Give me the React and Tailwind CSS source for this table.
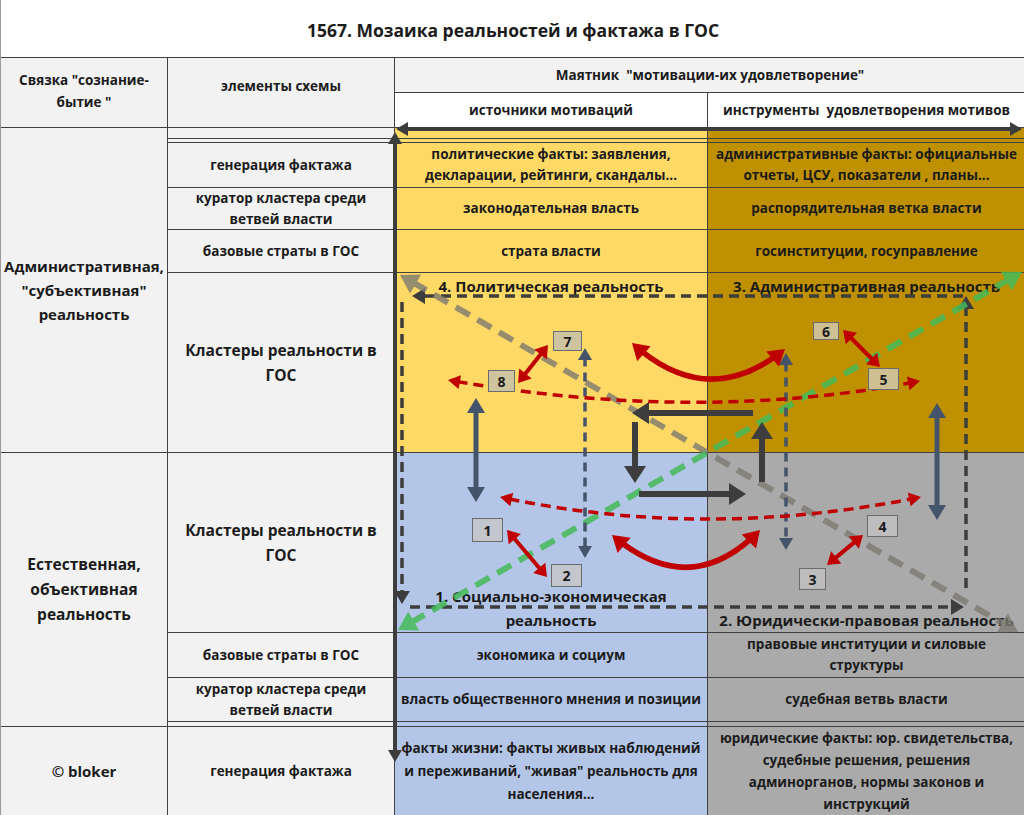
import React from 'react';

// arrow geometry helpers (page coordinates)
function unit(dx, dy) {
  const l = Math.hypot(dx, dy) || 1;
  return [dx / l, dy / l];
}

function headPts(tx, ty, ux, uy, len, half) {
  const bx = tx - ux * len;
  const by = ty - uy * len;
  return `${tx},${ty} ${bx - uy * half},${by + ux * half} ${bx + uy * half},${by - ux * half}`;
}

function Arrow({ x1, y1, x2, y2, color, w, dash, len = 12, half = 7, start = false, end = true, opacity = 1 }) {
  const [ux, uy] = unit(x2 - x1, y2 - y1);
  const cut = len * 0.8;
  const sx = start ? x1 + ux * cut : x1;
  const sy = start ? y1 + uy * cut : y1;
  const ex = end ? x2 - ux * cut : x2;
  const ey = end ? y2 - uy * cut : y2;
  return (
    <g opacity={opacity}>
      <line x1={sx} y1={sy} x2={ex} y2={ey} stroke={color} strokeWidth={w} strokeDasharray={dash} />
      {end && <polygon points={headPts(x2, y2, ux, uy, len, half)} fill={color} />}
      {start && <polygon points={headPts(x1, y1, -ux, -uy, len, half)} fill={color} />}
    </g>
  );
}

function Curve({ p0, c, p1, color, w, dash, len = 12, half = 7 }) {
  const cut = len * 0.8;
  const t0 = cut / (2 * Math.hypot(c[0] - p0[0], c[1] - p0[1]));
  const t1 = 1 - cut / (2 * Math.hypot(p1[0] - c[0], p1[1] - c[1]));
  const pt = (t) => [
    (1 - t) * (1 - t) * p0[0] + 2 * t * (1 - t) * c[0] + t * t * p1[0],
    (1 - t) * (1 - t) * p0[1] + 2 * t * (1 - t) * c[1] + t * t * p1[1],
  ];
  const a = pt(t0);
  const b = pt(t1);
  const k0 = (1 - t0) * (1 - t1);
  const k1 = (1 - t0) * t1 + t0 * (1 - t1);
  const k2 = t0 * t1;
  const cc = [k0 * p0[0] + k1 * c[0] + k2 * p1[0], k0 * p0[1] + k1 * c[1] + k2 * p1[1]];
  const [sx, sy] = unit(p0[0] - c[0], p0[1] - c[1]);
  const [ex, ey] = unit(p1[0] - c[0], p1[1] - c[1]);
  return (
    <g>
      <path
        d={`M${a[0]},${a[1]} Q${cc[0]},${cc[1]} ${b[0]},${b[1]}`}
        fill="none"
        stroke={color}
        strokeWidth={w}
        strokeDasharray={dash}
      />
      <polygon points={headPts(p0[0], p0[1], sx, sy, len, half)} fill={color} />
      <polygon points={headPts(p1[0], p1[1], ex, ey, len, half)} fill={color} />
    </g>
  );
}

function Cell({ className = '', children }) {
  return (
    <div className={`flex items-center justify-center text-center font-bold text-[#1b1b1b] ${className}`}>
      {children}
    </div>
  );
}

const RED = '#c00000';
const DARK = '#3d3d3d';
const SLATE = '#44546a';

const boxes = [
  { n: '7', x: 553, y: 331, w: 29, h: 20, bg: 'bg-[#cfc4a0]' },
  { n: '8', x: 488, y: 370, w: 27, h: 22, bg: 'bg-[#cfc4a0]' },
  { n: '6', x: 813, y: 322, w: 26, h: 18, bg: 'bg-[#cfc093]' },
  { n: '5', x: 868, y: 368, w: 31, h: 22, bg: 'bg-[#cfc093]' },
  { n: '1', x: 472, y: 518, w: 31, h: 24, bg: 'bg-[#c3c6cc]' },
  { n: '2', x: 551, y: 564, w: 31, h: 23, bg: 'bg-[#c3c6cc]' },
  { n: '4', x: 867, y: 515, w: 31, h: 22, bg: 'bg-[#bdbdbd]' },
  { n: '3', x: 799, y: 568, w: 27, h: 22, bg: 'bg-[#bdbdbd]' },
];

function Diagram() {
  return (
    <svg className="absolute left-0 top-0 pointer-events-none" width="1024" height="815" viewBox="0 0 1024 815">
      {/* pendulum axis */}
      <Arrow x1={396} y1={129} x2={1022} y2={129} color={DARK} w={4} len={12} half={7} start />
      <Arrow x1={395} y1={132} x2={395} y2={762} color={DARK} w={4} len={12} half={7} start />

      {/* dashed loop */}
      <Arrow x1={963} y1={296} x2={412} y2={296} color={DARK} w={3.5} dash="10 6" len={13} half={8} />
      <Arrow x1={402} y1={302} x2={402} y2={604} color={DARK} w={3.5} dash="10 6" len={13} half={8} />
      <Arrow x1={410} y1={607} x2={964} y2={607} color={DARK} w={3.5} dash="10 6" len={13} half={8} />
      <Arrow x1={966} y1={588} x2={966} y2={296} color={DARK} w={3.5} dash="10 6" len={13} half={8} />

      {/* diagonals */}
      <Arrow x1={400} y1={275} x2={1018} y2={632} color="#7c7a70" w={6} dash="16 9" len={18} half={11} start opacity={0.8} />
      <Arrow x1={398} y1={630} x2={1022} y2={272} color="#45bb5a" w={6} dash="16 9" len={18} half={11} start opacity={0.85} />

      {/* slate vertical arrows */}
      <Arrow x1={476} y1={398} x2={476} y2={502} color={SLATE} w={5} len={15} half={9} start />
      <Arrow x1={937} y1={403} x2={937} y2={520} color={SLATE} w={5} len={15} half={9} start />
      <Arrow x1={585} y1={348} x2={585} y2={558} color={SLATE} w={3.5} dash="9 6" len={12} half={7} start />
      <Arrow x1={786} y1={353} x2={786} y2={550} color={SLATE} w={3.5} dash="9 6" len={12} half={7} start />

      {/* central cycle */}
      <Arrow x1={753} y1={413} x2={632} y2={413} color={DARK} w={6} len={17} half={11} />
      <Arrow x1={635} y1={422} x2={635} y2={483} color={DARK} w={6} len={17} half={11} />
      <Arrow x1={639} y1={494} x2={746} y2={494} color={DARK} w={6} len={17} half={11} />
      <Arrow x1={762} y1={482} x2={762} y2={422} color={DARK} w={6} len={17} half={11} />

      {/* red dashed curves */}
      <Curve p0={[448, 380]} c={[700, 424]} p1={[920, 381]} color={RED} w={3.5} dash="10 6" len={12} half={7} />
      <Curve p0={[500, 497]} c={[705, 541]} p1={[921, 497]} color={RED} w={3.5} dash="10 6" len={12} half={7} />

      {/* red solid curves */}
      <Curve p0={[632, 343]} c={[708, 412]} p1={[785, 349]} color={RED} w={5.5} len={16} half={10} />
      <Curve p0={[612, 535]} c={[690, 602]} p1={[760, 530]} color={RED} w={5.5} len={16} half={10} />

      {/* red links between nodes */}
      <Arrow x1={518} y1={383} x2={548} y2={345} color={RED} w={4} len={12} half={8} start />
      <Arrow x1={843} y1={330} x2={880} y2={367} color={RED} w={4} len={12} half={8} start />
      <Arrow x1={507} y1={530} x2={547} y2={577} color={RED} w={4} len={12} half={8} start />
      <Arrow x1={827} y1={565} x2={863} y2={535} color={RED} w={4} len={12} half={8} start />
    </svg>
  );
}

export default function App() {
  return (
    <div className="relative w-[1024px] h-[815px] overflow-hidden bg-white font-['Open_Sans','Noto_Sans',sans-serif]">
      <div className="grid grid-cols-[166px_226px_312px_317px] grid-rows-[57px_34px_34px_10px_3px_44px_41px_42px_179px_179px_44px_43px_4px_88px] gap-px bg-[#404040] border-l border-[#9a9a9a]">
        <Cell className="col-span-4 bg-white text-[17.5px] pt-1">1567. Мозаика реальностей и фактажа в ГОС</Cell>

        {/* column 1 */}
        <Cell className="col-start-1 row-start-2 row-span-2 bg-[#f2f2f2] text-[13.5px] leading-[22px] pb-1">
          Связка "сознание-
          <br />
          бытие "
        </Cell>
        <Cell className="col-start-1 row-start-4 row-span-6 bg-[#f2f2f2] text-[15px] leading-[24px] whitespace-nowrap">
          <span>
            Административная,
            <br />
            "субъективная"
            <br />
            реальность
          </span>
        </Cell>
        <Cell className="col-start-1 row-start-10 row-span-4 bg-[#f2f2f2] text-[15.5px] leading-[25px] whitespace-nowrap">
          <span>
            Естественная,
            <br />
            объективная
            <br />
            реальность
          </span>
        </Cell>
        <Cell className="col-start-1 row-start-14 bg-[#f2f2f2] text-[15px]">© bloker</Cell>

        {/* column 2 */}
        <Cell className="col-start-2 row-start-2 row-span-2 bg-[#f2f2f2] text-[13.5px] pb-3">элементы схемы</Cell>
        <Cell className="col-start-2 row-start-4 bg-[#f2f2f2]" />
        <Cell className="col-start-2 row-start-5 bg-[#f2f2f2]" />
        <Cell className="col-start-2 row-start-6 bg-[#f2f2f2] text-[13.5px]">генерация фактажа</Cell>
        <Cell className="col-start-2 row-start-7 bg-[#f2f2f2] text-[13.5px] leading-[21px]">
          <span>
            куратор кластера среди
            <br />
            ветвей власти
          </span>
        </Cell>
        <Cell className="col-start-2 row-start-8 bg-[#f2f2f2] text-[13.5px]">базовые страты в ГОС</Cell>
        <Cell className="col-start-2 row-start-9 bg-[#f2f2f2] text-[15.5px] leading-[25px]">
          <span>
            Кластеры реальности в
            <br />
            ГОС
          </span>
        </Cell>
        <Cell className="col-start-2 row-start-10 bg-[#f2f2f2] text-[15.5px] leading-[25px]">
          <span>
            Кластеры реальности в
            <br />
            ГОС
          </span>
        </Cell>
        <Cell className="col-start-2 row-start-11 bg-[#f2f2f2] text-[13.5px]">базовые страты в ГОС</Cell>
        <Cell className="col-start-2 row-start-12 bg-[#f2f2f2] text-[13.5px] leading-[21px]">
          <span>
            куратор кластера среди
            <br />
            ветвей власти
          </span>
        </Cell>
        <Cell className="col-start-2 row-start-13 bg-[#f2f2f2]" />
        <Cell className="col-start-2 row-start-14 bg-[#f2f2f2] text-[13.5px]">генерация фактажа</Cell>

        {/* header of pendulum */}
        <Cell className="col-start-3 col-span-2 row-start-2 bg-[#f2f2f2] text-[13.5px] whitespace-pre">
          Маятник  "мотивации-их удовлетворение"
        </Cell>
        <Cell className="col-start-3 row-start-3 bg-white text-[13.5px]">источники мотиваций</Cell>
        <Cell className="col-start-4 row-start-3 bg-white text-[13.5px] whitespace-pre">инструменты  удовлетворения мотивов</Cell>

        {/* upper half: administrative */}
        <Cell className="col-start-3 row-start-4 bg-[#ffd966]" />
        <Cell className="col-start-4 row-start-4 bg-[#bf9000]" />
        <Cell className="col-start-3 row-start-5 bg-[#ffd966]" />
        <Cell className="col-start-4 row-start-5 bg-[#bf9000]" />
        <Cell className="col-start-3 row-start-6 bg-[#ffd966] text-[13.5px] leading-[21px] whitespace-nowrap">
          <span>
            политические факты: заявления,
            <br />
            декларации, рейтинги, скандалы...
          </span>
        </Cell>
        <Cell className="col-start-4 row-start-6 bg-[#bf9000] text-[13.5px] leading-[21px] whitespace-nowrap">
          <span>
            административные факты: официальные
            <br />
            отчеты, ЦСУ, показатели , планы...
          </span>
        </Cell>
        <Cell className="col-start-3 row-start-7 bg-[#ffd966] text-[13.5px]">законодательная власть</Cell>
        <Cell className="col-start-4 row-start-7 bg-[#bf9000] text-[13.5px]">распорядительная ветка власти</Cell>
        <Cell className="col-start-3 row-start-8 bg-[#ffd966] text-[13.5px]">страта власти</Cell>
        <Cell className="col-start-4 row-start-8 bg-[#bf9000] text-[13.5px]">госинституции, госуправление</Cell>
        <div className="col-start-3 row-start-9 bg-[#ffd966] flex justify-center pt-[3px]">
          <span className="font-bold text-[15px] leading-[20px] text-[#1b1b1b] whitespace-nowrap">4. Политическая реальность</span>
        </div>
        <div className="col-start-4 row-start-9 bg-[#bf9000] flex justify-center pt-[3px]">
          <span className="font-bold text-[15px] leading-[20px] text-[#1b1b1b] whitespace-nowrap">3. Административная реальность</span>
        </div>

        {/* lower half: natural */}
        <div className="col-start-3 row-start-10 bg-[#b4c6e7] flex flex-col justify-end items-center">
          <span className="font-bold text-[15px] leading-[24px] text-[#1b1b1b] text-center whitespace-nowrap">
            1. Социально-экономическая
            <br />
            реальность
          </span>
        </div>
        <div className="col-start-4 row-start-10 bg-[#aaaaaa] flex flex-col justify-end items-center">
          <span className="font-bold text-[15px] leading-[24px] text-[#1b1b1b] whitespace-nowrap">2. Юридически-правовая реальность</span>
        </div>
        <Cell className="col-start-3 row-start-11 bg-[#b4c6e7] text-[13.5px]">экономика и социум</Cell>
        <Cell className="col-start-4 row-start-11 bg-[#aaaaaa] text-[13.5px] leading-[21px]">
          <span>
            правовые институции и силовые
            <br />
            структуры
          </span>
        </Cell>
        <Cell className="col-start-3 row-start-12 bg-[#b4c6e7] text-[13.5px] whitespace-nowrap">власть общественного мнения и позиции</Cell>
        <Cell className="col-start-4 row-start-12 bg-[#aaaaaa] text-[13.5px]">судебная ветвь власти</Cell>
        <Cell className="col-start-3 row-start-13 bg-[#b4c6e7]" />
        <Cell className="col-start-4 row-start-13 bg-[#aaaaaa]" />
        <Cell className="col-start-3 row-start-14 bg-[#b4c6e7] text-[13.5px] leading-[23px] whitespace-nowrap overflow-hidden">
          <span>
            факты жизни: факты живых наблюдений
            <br />
            и переживаний, "живая" реальность для
            <br />
            населения...
          </span>
        </Cell>
        <Cell className="col-start-4 row-start-14 bg-[#aaaaaa] text-[13.5px] leading-[22px] whitespace-nowrap overflow-hidden">
          <span>
            юридические факты: юр. свидетельства,
            <br />
            судебные решения, решения
            <br />
            админорганов, нормы законов и
            <br />
            инструкций
          </span>
        </Cell>
      </div>

      <Diagram />

      {boxes.map((b) => (
        <div
          key={b.n}
          className={`absolute flex items-center justify-center border border-[#6b6b6b] font-bold text-[14px] text-[#1b1b1b] ${b.bg}`}
          style={{ left: b.x, top: b.y, width: b.w, height: b.h }}
        >
          {b.n}
        </div>
      ))}
    </div>
  );
}
